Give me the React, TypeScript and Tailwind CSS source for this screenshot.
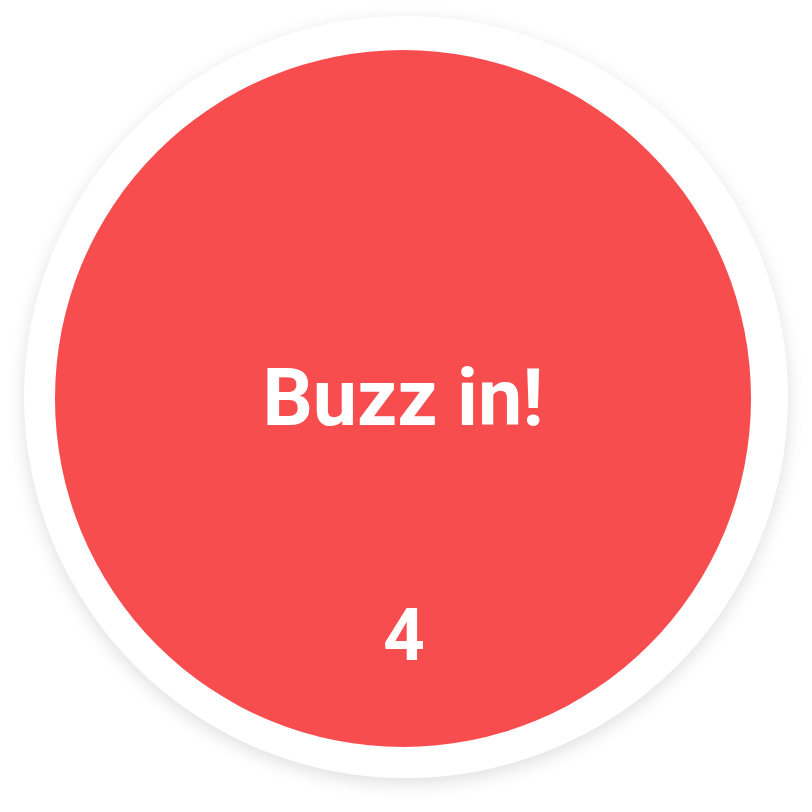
import React from "react";

export default function App() {
  return (
    <div
      className="w-[812px] h-[812px] bg-white overflow-hidden pl-[24px] pt-[16px]"
      style={{ fontFamily: "Roboto, 'Noto Sans', Arial, sans-serif" }}
    >
      <div className="w-[764px] h-[762px] rounded-full bg-white shadow-[0_5px_18px_rgba(0,0,0,0.13)] pl-[31px] pt-[34px]">
        <button className="relative w-[696px] h-[697px] rounded-full bg-[#f84d4f] flex items-center justify-center text-white">
          <span className="text-[79px] font-bold leading-none">Buzz in!</span>
          <span className="absolute left-[2px] right-0 top-[549px] text-center text-[73px] font-bold leading-none">
            4
          </span>
        </button>
      </div>
    </div>
  );
}
